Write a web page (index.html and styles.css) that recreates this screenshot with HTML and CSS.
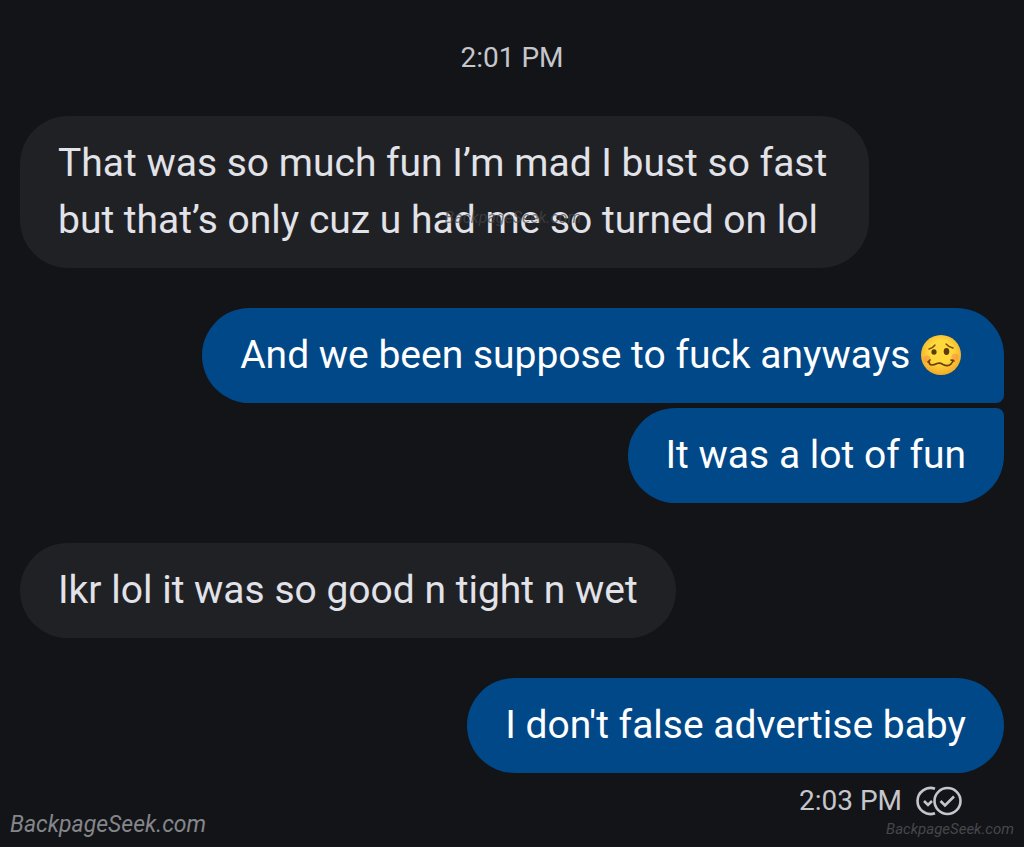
FILE: index.html
```html
<!DOCTYPE html>
<html lang="en">
<head>
  <meta charset="UTF-8">
  <meta name="viewport" content="width=device-width, initial-scale=1">
  <title>Messages</title>
  <link rel="stylesheet" href="styles.css">
</head>
<body>
<main class="chat">
  <time class="chat-time">2:01 PM</time>

  <div class="group received">
    <p class="bubble">That was so much fun I’m mad I bust so fast but that’s only cuz u had me so turned on lol
      <span class="watermark watermark-center">BackpageSeek.com</span>
    </p>
  </div>

  <div class="group sent">
    <p class="bubble">And we been suppose to fuck anyways
      <svg class="emoji" viewBox="0 0 42 42" role="img" aria-label="woozy face">
        <defs>
          <radialGradient id="face" cx="50%" cy="42%" r="58%">
            <stop offset="50%" stop-color="#ffd83c"/>
            <stop offset="100%" stop-color="#f3a927"/>
          </radialGradient>
        </defs>
        <circle cx="21" cy="21" r="20" fill="url(#face)"/>
        <circle cx="7" cy="25" r="3.5" fill="#f5874a" opacity=".5"/>
        <circle cx="35" cy="23" r="3.5" fill="#f5874a" opacity=".5"/>
        <ellipse cx="14" cy="18" rx="2.6" ry="2.8" fill="#5d3a0b"/>
        <ellipse cx="26.5" cy="17.5" rx="2.8" ry="3.4" fill="#5d3a0b"/>
        <path d="M9 15Q13 14 15 11M26 10Q28 12.500 33 14" fill="none" stroke="#7a4b0c" stroke-width="1.4" stroke-linecap="round"/>
        <path d="M9 27Q9 31 12 31Q14 31 17 29.500Q20 28.500 23 30.500Q28 33 31 30Q33 28 33 26M8 28L10 26M31 26L34 27" fill="none" stroke="#6b3d0a" stroke-width="1.7" stroke-linecap="round" stroke-linejoin="round"/>
      </svg>
    </p>
    <p class="bubble">It was a lot of fun</p>
  </div>

  <div class="group received">
    <p class="bubble">Ikr lol it was so good n tight n wet</p>
  </div>

  <div class="group sent">
    <p class="bubble">I don't false advertise baby</p>
  </div>

  <div class="status">
    <time>2:03 PM</time>
    <svg class="read" viewBox="0 0 46 30" role="img" aria-label="Read">
      <g fill="none" stroke="currentColor" stroke-width="2.6">
        <path d="M19 2.800A13 13 0 1 0 19 27.200"/>
        <circle cx="31.500" cy="15" r="13"/>
        <path d="M8 15L12 19L16 15"/>
        <path d="M24.500 15L29 19.500L38 10.500"/>
      </g>
    </svg>
  </div>
</main>

<footer class="marks">
  <span class="watermark watermark-large">BackpageSeek.com</span>
  <span class="watermark watermark-small">BackpageSeek.com</span>
</footer>
</body>
</html>
```

FILE: styles.css
```css
* {
  box-sizing: border-box;
}

body {
  margin: 0;
  background: #131418;
  color: #e2e2e9;
  font-family: Roboto, "Open Sans", sans-serif;
  font-size: 39px;
  line-height: 57px;
}

.chat {
  display: flex;
  flex-direction: column;
  gap: 40px;
  padding: 40px 20px 0;
}

.chat-time,
.status {
  color: #c5c6cc;
  font-size: 28px;
  line-height: 36px;
}

.chat-time {
  align-self: center;
}

.group {
  display: flex;
  flex-direction: column;
  align-items: flex-start;
  gap: 5px;
}

.bubble {
  position: relative;
  max-width: 86.3%;
  margin: 0;
  padding: 19px 38px;
  border-radius: 48px;
  background: #202125;
}

.sent {
  align-items: flex-end;
}

.sent .bubble {
  background: #004887;
  color: #fff;
}

/* consecutive messages share tight corners */
.sent .bubble:not(:last-child) {
  border-bottom-right-radius: 8px;
}

.sent .bubble:not(:first-child) {
  border-top-right-radius: 8px;
}

.emoji {
  width: 42px;
  height: 42px;
  margin-right: 4px;
  vertical-align: -8px;
}

.status {
  display: flex;
  align-items: center;
  justify-content: flex-end;
  gap: 14px;
  margin-top: -30px;
  padding-right: 42px;
}

.read {
  width: 46px;
  height: 30px;
}

.watermark {
  color: #46474b;
  font-size: 16px;
  font-style: italic;
  line-height: 20px;
}

.watermark-large {
  color: #85868a;
  font-size: 23px;
  line-height: 28px;
}

.watermark-small {
  font-size: 15px;
}

.watermark-center {
  position: absolute;
  top: 92px;
  left: 50%;
  opacity: .7;
}

.marks {
  display: flex;
  align-items: flex-end;
  justify-content: space-between;
  margin-top: -8px;
  padding: 0 10px;
}
```
